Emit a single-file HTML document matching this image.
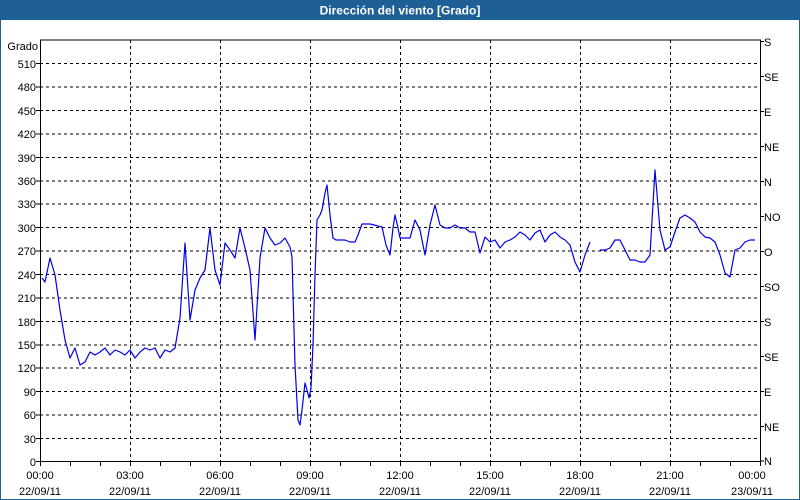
<!DOCTYPE html>
<html><head><meta charset="utf-8"><style>
html,body{margin:0;padding:0;background:#fff}
body{width:800px;height:500px;overflow:hidden;position:relative;font-family:"Liberation Sans","DejaVu Sans",sans-serif}
</style></head><body>
<svg width="800" height="500" xmlns="http://www.w3.org/2000/svg" style="position:absolute;left:0;top:0">
<rect x="0" y="0" width="800" height="500" fill="#fff"/>
<rect x="0" y="0" width="800" height="20" fill="#1e5f96"/>
<rect x="0.5" y="0" width="799" height="499.5" fill="none" stroke="#1e5f96" stroke-width="1"/>
<text x="400" y="14.5" fill="#fff" font-size="12" font-weight="bold" text-anchor="middle">Dirección del viento [Grado]</text>
<g stroke="#000" stroke-width="1" stroke-dasharray="3,3" fill="none">
<path d="M40 63.5H760M40 87H760M40 110.5H760M40 134H760M40 157.5H760M40 181H760M40 204H760M40 227.5H760M40 251H760M40 274.5H760M40 298H760M40 321.5H760M40 345H760M40 368H760M40 391.5H760M40 415H760M40 438.5H760"/>
<path d="M130.5 40V461M220.5 40V461M310.5 40V461M400.5 40V461M490.5 40V461M580.5 40V461M670.5 40V461"/>
</g>
<g stroke="#000" stroke-width="1" fill="none">
<path d="M40.5 40V461.5H760.5V40H40"/>
<path d="M70.5 461v5M100.5 461v5M130.5 461v5M160.5 461v5M190.5 461v5M220.5 461v5M250.5 461v5M280.5 461v5M310.5 461v5M340.5 461v5M370.5 461v5M400.5 461v5M430.5 461v5M460.5 461v5M490.5 461v5M520.5 461v5M550.5 461v5M580.5 461v5M610.5 461v5M640.5 461v5M670.5 461v5M700.5 461v5M730.5 461v5M40.5 461v5M760.5 461v5"/>
<path d="M36 63.5h4M36 87h4M36 110.5h4M36 134h4M36 157.5h4M36 181h4M36 204h4M36 227.5h4M36 251h4M36 274.5h4M36 298h4M36 321.5h4M36 345h4M36 368h4M36 391.5h4M36 415h4M36 438.5h4M36 461.5h4"/>
<path d="M760 41.5h4M760 76.5h4M760 111.5h4M760 146.5h4M760 181.5h4M760 216.5h4M760 251.5h4M760 286.5h4M760 321.5h4M760 356.5h4M760 391.5h4M760 426.5h4M760 461h4"/>
</g>
<g font-size="11" fill="#000" text-anchor="end">
<text x="38" y="50">Grado</text>
<text x="36" y="68">510</text><text x="36" y="91">480</text><text x="36" y="115">450</text><text x="36" y="138">420</text><text x="36" y="162">390</text><text x="36" y="185">360</text><text x="36" y="208">330</text><text x="36" y="232">300</text><text x="36" y="255">270</text><text x="36" y="279">240</text><text x="36" y="302">210</text><text x="36" y="326">180</text><text x="36" y="349">150</text><text x="36" y="372">120</text><text x="36" y="396">90</text><text x="36" y="419">60</text><text x="36" y="443">30</text><text x="36" y="466">0</text>
</g>
<g font-size="11" fill="#000">
<text x="764" y="46">S</text><text x="764" y="81">SE</text><text x="764" y="116">E</text><text x="764" y="151">NE</text><text x="764" y="186">N</text><text x="764" y="221">NO</text><text x="764" y="256">O</text><text x="764" y="291">SO</text><text x="764" y="326">S</text><text x="764" y="361">SE</text><text x="764" y="396">E</text><text x="764" y="431">NE</text><text x="764" y="465">N</text>
</g>
<g font-size="11" fill="#000" text-anchor="middle">
<text x="40" y="479">00:00</text><text x="40" y="495">22/09/11</text>
<text x="130" y="479">03:00</text><text x="130" y="495">22/09/11</text>
<text x="220" y="479">06:00</text><text x="220" y="495">22/09/11</text>
<text x="310" y="479">09:00</text><text x="310" y="495">22/09/11</text>
<text x="400" y="479">12:00</text><text x="400" y="495">22/09/11</text>
<text x="490" y="479">15:00</text><text x="490" y="495">22/09/11</text>
<text x="580" y="479">18:00</text><text x="580" y="495">22/09/11</text>
<text x="670" y="479">21:00</text><text x="670" y="495">22/09/11</text>
<text x="752" y="479">00:00</text><text x="752" y="495">23/09/11</text>
</g>
<g fill="none" stroke="#0000ee" stroke-width="1.2" stroke-linejoin="round">
<polyline points="42,278 45,282 50,258 55,275 60,310 65,340 70,358 75,348 80,365 85,362 90,352 95,355 100,352 105,348 110,355 115,350 120,352 125,355 130,350 135,358 140,352 145,348 150,350 155,348 160,358 165,350 170,352 175,348 180,318 185,243 190,320 195,290 200,278 205,270 210,228 215,270 220,285 225,243 230,250 235,258 240,228 245,248 250,270 255,340 260,258 265,228 270,238 275,245 280,243 285,238 290,247 292,257 295,365 298,420 300,425 302,410 305,383 307,390 309,398 311,388 313,345 315,275 317,220 320,215 322,210 325,193 327,185 330,215 333,238 336,240 340,240 345,240 350,242 355,242 358,235 362,224 370,224 382,227 386,245 390,255 393,228 395,215 398,228 400,238 405,238 410,238 415,220 420,230 425,255 430,225 435,205 440,225 445,228 450,228 455,225 460,228 465,228 470,232 475,232 480,253 485,237 490,242 495,240 500,248 505,242 510,240 515,237 520,232 525,235 530,240 535,233 540,230 545,242 550,235 555,232 560,237 565,240 570,245 575,262 580,272 585,255 590,242"/>
<polyline points="600,250 605,250 610,248 615,240 620,240 625,250 630,260 635,260 640,262 645,262 650,255 655,170 660,230 665,250 670,247 675,232 680,218 685,215 690,218 695,222 700,232 705,237 710,238 715,242 720,255 725,273 730,277 735,250 740,248 745,242 750,240 755,240"/>
</g>
</svg>
</body></html>
